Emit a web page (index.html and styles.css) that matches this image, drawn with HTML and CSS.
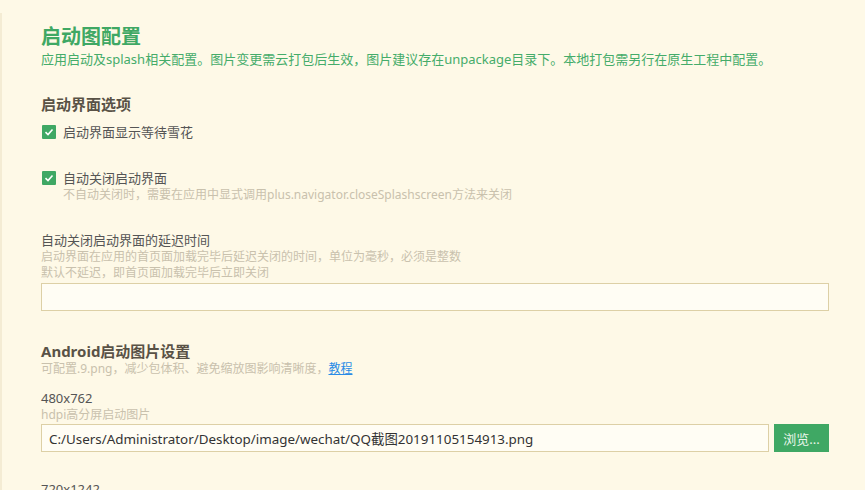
FILE: index.html
```
<!DOCTYPE html>
<html>

<head>
    <title>启动图配置</title>
    <link rel="stylesheet" href="styles.css">
</head>

<body>
    <div class="page">
        <div class="page-title">启动图配置</div>
        <div class="page-desc">应用启动及splash相关配置。图片变更需云打包后生效，图片建议存在unpackage目录下。本地打包需另行在原生工程中配置。</div>

        <div class="section-title first">启动界面选项</div>

        <div class="check-row">
            <span class="check-box">
                <svg width="14" height="14" viewBox="0 0 14 14"><polyline points="3.5,7.2 6,9.5 10.5,4.5" fill="none" stroke="#fff" stroke-width="1.6"/></svg>
            </span>
            <div class="check-text">
                <div class="check-label">启动界面显示等待雪花</div>
            </div>
        </div>

        <div class="check-row second">
            <span class="check-box">
                <svg width="14" height="14" viewBox="0 0 14 14"><polyline points="3.5,7.2 6,9.5 10.5,4.5" fill="none" stroke="#fff" stroke-width="1.6"/></svg>
            </span>
            <div class="check-text">
                <div class="check-label">自动关闭启动界面</div>
                <div class="hint">不自动关闭时，需要在应用中显式调用plus.navigator.closeSplashscreen方法来关闭</div>
            </div>
        </div>

        <div class="field">
            <div class="field-label">自动关闭启动界面的延迟时间</div>
            <div class="hint">启动界面在应用的首页面加载完毕后延迟关闭的时间，单位为毫秒，必须是整数</div>
            <div class="hint">默认不延迟，即首页面加载完毕后立即关闭</div>
            <input class="text-input delay-input" type="text">
        </div>

        <div class="section-title android">Android启动图片设置</div>
        <div class="hint">可配置.9.png，减少包体积、避免缩放图影响清晰度，<a class="link" href="#">教程</a></div>

        <div class="field small-gap">
            <div class="field-label">480x762</div>
            <div class="hint">hdpi高分屏启动图片</div>
            <div class="file-row">
                <input class="text-input" type="text" value="C:/Users/Administrator/Desktop/image/wechat/QQ截图20191105154913.png">
                <button class="browse-btn">浏览...</button>
            </div>
        </div>

        <div class="field">
            <div class="field-label">720x1242</div>
        </div>
    </div>
</body>

</html>
```

FILE: styles.css
```
body {
    margin: 0;
    background-color: #fef9e7;
    font-family: "Noto Sans", "Noto Sans CJK SC", sans-serif;
    color: #555;
    overflow: hidden;
}

.page {
    margin-top: 13px;
    padding: 12px 36px 40px 39px;
    border-left: 2px solid #f4ecd4;
    min-height: 600px;
}

.page-title {
    font-size: 20px;
    line-height: 24px;
    font-weight: bold;
    color: #3fa864;
}

.page-desc {
    font-size: 13px;
    line-height: 20px;
    color: #45ac6a;
}

.section-title {
    font-size: 15px;
    line-height: 20px;
    font-weight: bold;
    color: #595246;
}

.section-title.first {
    margin-top: 25px;
    margin-bottom: 9px;
}

.section-title.android {
    margin-top: 30px;
}

.check-row {
    display: flex;
    align-items: flex-start;
    padding-left: 1px;
}

.check-row.second {
    margin-top: 28px;
}

.check-box {
    flex: 0 0 14px;
    width: 14px;
    height: 14px;
    margin-top: 2px;
    background: #3fa864;
    border-radius: 1px;
    display: flex;
}

.check-text {
    margin-left: 7px;
}

.check-label,
.field-label {
    font-size: 13px;
    line-height: 18px;
    color: #555;
}

.hint {
    font-size: 12px;
    line-height: 16px;
    color: #c9c1ad;
}

.link {
    color: #2a8ce6;
    text-decoration: underline;
}

.field {
    margin-top: 28px;
}

.field.small-gap {
    margin-top: 12px;
}

.text-input {
    display: block;
    box-sizing: border-box;
    width: 100%;
    height: 28px;
    margin: 0;
    padding: 0 7px;
    border: 1px solid #ddd0a6;
    background: #fffdf4;
    font-family: "Noto Sans", "Noto Sans CJK SC", sans-serif;
    font-size: 13.4px;
    color: #333;
    outline: none;
}

.delay-input {
    margin-top: 2px;
}

.file-row {
    display: flex;
    gap: 5px;
    margin-top: 1px;
}

.file-row .text-input {
    flex: 1;
}

.browse-btn {
    flex: 0 0 55px;
    height: 28px;
    padding: 0;
    border: none;
    background: #3fa864;
    color: #eaf6ea;
    font-family: "Noto Sans", "Noto Sans CJK SC", sans-serif;
    font-size: 13px;
    cursor: pointer;
}
```
